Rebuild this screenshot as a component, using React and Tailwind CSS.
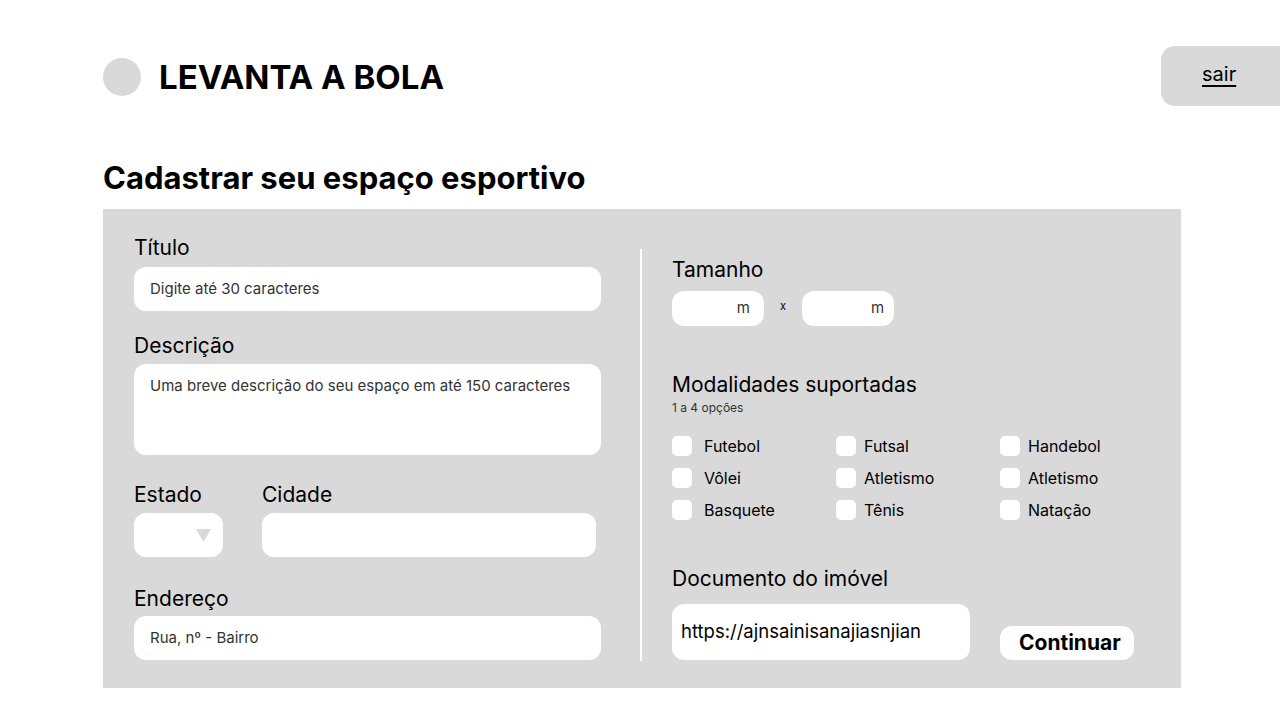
import { useState } from 'react';

const modalidades = [
  ['Futebol', 'Futsal', 'Handebol'],
  ['Vôlei', 'Atletismo', 'Atletismo'],
  ['Basquete', 'Tênis', 'Natação'],
];

function Label({ children, className = '' }) {
  return <p className={`text-[21px] leading-6 text-black ${className}`}>{children}</p>;
}

function Checkbox({ label, gap }) {
  const [checked, setChecked] = useState(false);
  return (
    <label className={`flex items-center ${gap} cursor-pointer`}>
      <button
        type="button"
        onClick={() => setChecked(!checked)}
        className="w-5 h-5 rounded-[5px] bg-white flex items-center justify-center text-xs"
      >
        {checked ? '✓' : ''}
      </button>
      <span className="text-base leading-5 text-black">{label}</span>
    </label>
  );
}

export default function App() {
  return (
    <div className="w-[1280px] h-[720px] bg-white overflow-hidden font-['Inter','Liberation_Sans',sans-serif]">
      {/* Header */}
      <header className="flex items-start justify-between pl-[103px] pt-[46px]">
        <div className="flex items-center gap-[18px] mt-3">
          <div className="w-[38px] h-[38px] rounded-full bg-[#d9d9d9]"></div>
          <h1 className="text-[33px] leading-[38px] font-bold text-black">LEVANTA A BOLA</h1>
        </div>
        <button className="w-[140px] h-[60px] rounded-l-[14px] bg-[#d9d9d9] flex items-center pl-[41px] pb-[4px] -mr-[21px]">
          <span className="text-[20px] underline underline-offset-4 text-black">sair</span>
        </button>
      </header>

      <main className="pl-[103px]">
        <h2 className="mt-[52px] text-[31px] leading-[40px] font-bold text-black">Cadastrar seu espaço esportivo</h2>

        <div className="mt-[11px] w-[1078px] h-[479px] bg-[#d9d9d9] flex pl-[31px]">
          {/* Left column */}
          <div className="w-[467px] pt-[27px]">
            <Label className="mb-[7px]">Título</Label>
            <div className="h-[44px] rounded-[12px] bg-white flex items-center px-4 text-[15px] text-[#333]">
              Digite até 30 caracteres
            </div>

            <Label className="mt-[23px] mb-[6px]">Descrição</Label>
            <div className="h-[91px] rounded-[12px] bg-white px-4 pt-[12px] text-[15px] leading-5 text-[#333]">
              Uma breve descrição do seu espaço em até 150 caracteres
            </div>

            <div className="flex mt-[28px] gap-[39px]">
              <div>
                <Label className="mb-[6px]">Estado</Label>
                <div className="w-[89px] h-[44px] rounded-[12px] bg-white flex items-center justify-end pr-3">
                  <svg width="15" height="13" viewBox="0 0 15 13">
                    <path d="M0 0 H15 L7.5 13 Z" fill="#d9d9d9" />
                  </svg>
                </div>
              </div>
              <div>
                <Label className="mb-[6px]">Cidade</Label>
                <div className="w-[334px] h-[44px] rounded-[12px] bg-white"></div>
              </div>
            </div>

            <Label className="mt-[30px] mb-[5px]">Endereço</Label>
            <div className="h-[44px] rounded-[12px] bg-white flex items-center px-4 text-[15px] text-[#333]">
              Rua, nº - Bairro
            </div>
          </div>

          {/* Divider */}
          <div className="ml-[39px] mt-[40px] w-[2px] h-[412px] bg-white"></div>

          {/* Right column */}
          <div className="ml-[30px] flex-1 pt-[49px]">
            <Label className="mb-[9px]">Tamanho</Label>
            <div className="flex items-center">
              <div className="w-[92px] h-[35px] rounded-[12px] bg-white flex items-center justify-end pr-[14px] text-[15px] text-[#333]">m</div>
              <span className="mx-[16px] text-[11px] leading-none text-black -mt-[4px]">x</span>
              <div className="w-[92px] h-[35px] rounded-[12px] bg-white flex items-center justify-end pr-[10px] text-[15px] text-[#333]">m</div>
            </div>

            <Label className="mt-[47px]">Modalidades suportadas</Label>
            <p className="text-[12px] leading-4 text-[#333] mt-[3px]">1 a 4 opções</p>

            <div className="mt-[20px] grid grid-cols-[164px_164px_1fr] gap-y-3">
              {modalidades.map((row, r) =>
                row.map((m, c) => (
                  <Checkbox key={`${r}-${c}`} label={m} gap={c === 0 ? 'gap-3' : 'gap-2'} />
                ))
              )}
            </div>

            <Label className="mt-[47px] mb-[13px]">Documento do imóvel</Label>
            <div className="flex items-end gap-[30px]">
              <div className="w-[298px] h-[56px] rounded-[12px] bg-white flex items-center pl-[9px] text-[18.5px] text-black">
                https://ajnsainisanajiasnjian
              </div>
              <button className="w-[134px] h-[34px] rounded-[12px] bg-white flex items-center pl-[19px] text-[21px] font-bold text-black">
                Continuar
              </button>
            </div>
          </div>
        </div>
      </main>
    </div>
  );
}
